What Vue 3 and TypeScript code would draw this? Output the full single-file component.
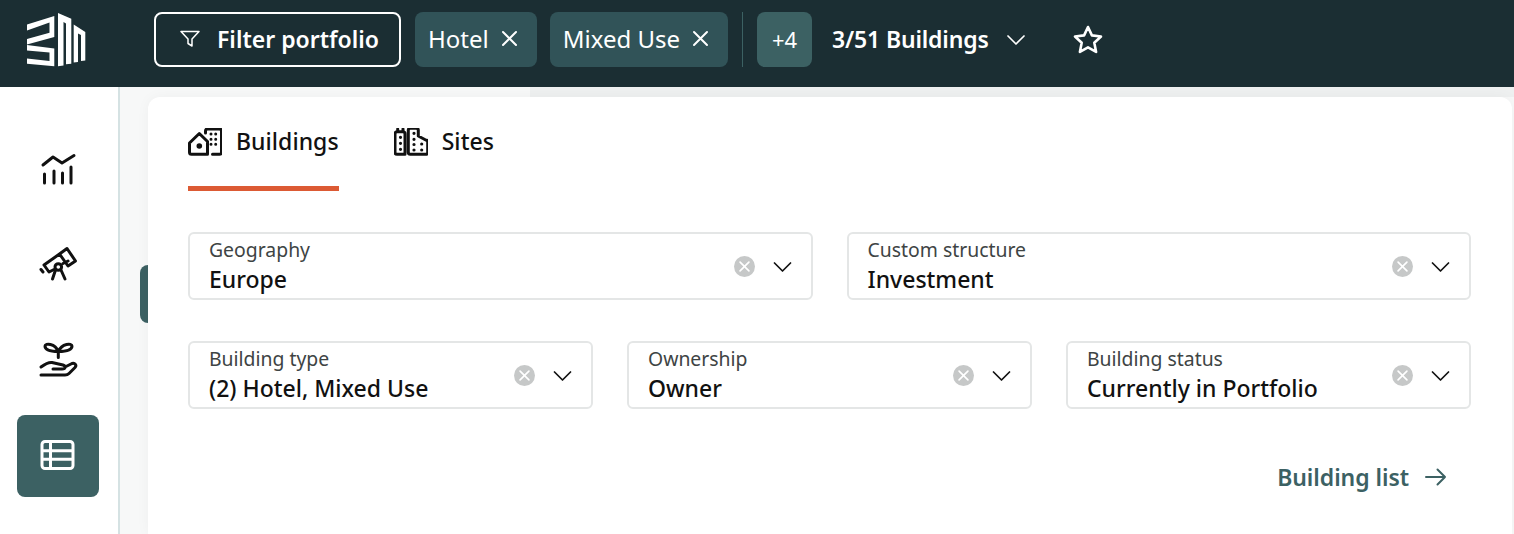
<script setup lang="ts">
interface Field {
  label: string
  value: string
}

const topFields: Field[] = [
  { label: 'Geography', value: 'Europe' },
  { label: 'Custom structure', value: 'Investment' },
]

const bottomFields: Field[] = [
  { label: 'Building type', value: '(2) Hotel, Mixed Use' },
  { label: 'Ownership', value: 'Owner' },
  { label: 'Building status', value: 'Currently in Portfolio' },
]

const rows: { cols: string; fields: Field[] }[] = [
  { cols: 'two', fields: topFields },
  { cols: 'three', fields: bottomFields },
]

const chips = ['Hotel', 'Mixed Use']
</script>

<template>
  <div class="page">
    <header class="topbar">
      <svg class="logo" viewBox="0 0 59 54" fill="#fff">
        <path d="M0 11.500 27.300 3V24L0 31.500V26L22.500 19.700V9.500L0 17.500z" />
        <path d="M0 32 27.300 35.500V53.200L0 50.800V45.500L22.500 48V39.500L0 37.500z" />
        <path d="M31 0 44.300 5.800V50.800L39 51.300V10.500L36.500 9V52.600L31 53.200z" />
        <path d="M46.700 11.500 58.300 19V47.500L54 48V22L51 20.500V49L46.700 49.500z" />
      </svg>
      <button class="filter-btn" type="button">
        <svg class="filter-icon" viewBox="0 0 20 20" fill="none" stroke="#fff" stroke-width="1.500" stroke-linejoin="round">
          <path d="M1 2.500h18l-7 7.500v7l-4-2.500V10z" />
        </svg>
        <span>Filter portfolio</span>
      </button>
      <div v-for="chip in chips" :key="chip" class="chip">
        <span>{{ chip }}</span>
        <svg class="chip-x" viewBox="0 0 17 17" fill="none" stroke="#fff" stroke-width="2" stroke-linecap="round">
          <path d="M2 2l13 13M15 2 2 15" />
        </svg>
      </div>
      <span class="divider"></span>
      <div class="more">+4</div>
      <span class="count">3/51 Buildings</span>
      <svg class="count-caret" viewBox="0 0 18 10" fill="none" stroke="#fff" stroke-width="1.700" stroke-linecap="round" stroke-linejoin="round">
        <path d="M1 1l8 8 8-8" />
      </svg>
      <svg class="star" viewBox="0 0 30 29" fill="none" stroke="#fff" stroke-width="2.600" stroke-linejoin="round">
        <path d="M15 2l3.900 8.400 9.100 1.100-6.700 6.300 1.800 9.100L15 22.400 6.900 26.900l1.800-9.100L2 11.500l9.100-1.100z" />
      </svg>
    </header>

    <div class="body">
      <nav class="sidebar">
        <a class="nav-item">
          <svg viewBox="0 0 36 34" fill="none" stroke="#111" stroke-width="3" stroke-linecap="round" stroke-linejoin="round">
            <path d="M3 11 13 3l9 6L34 1.500M4.500 20v9M14 17v12M22.500 19v10M31 13v16" />
          </svg>
        </a>
        <a class="nav-item">
          <svg viewBox="0 2 36 34" fill="none" stroke="#111" stroke-width="3" stroke-linecap="round" stroke-linejoin="round">
            <path d="M27 1.500 35.500 14 28 19 19.500 7zM19.500 7 4 18l5 7 5-2.500M23 16.500l5-2.500M1 22.500l2 2.500" />
            <circle cx="18.300" cy="20" r="3.300" />
            <path d="M15.500 23l-3 9M21 23l4 9" />
          </svg>
        </a>
        <a class="nav-item">
          <svg viewBox="0 2 36 34" fill="none" stroke="#111" stroke-width="3" stroke-linecap="round" stroke-linejoin="round">
            <path d="M18.300 9.500v6M18.300 9.500C15 9.500 5 9 5 4c0-3 10-3 13.300 5.500zM18.300 9.500C22 9.500 32 9 32 4c0-3-10-3-13.700 5.500z" />
            <path d="M1 25c4-3 7-5 11-4.500l11 2.500c3 1 3 4-1 4H13M26 24.500l6-3c3-1 5 2 3 4l-6 6c-1 1-2 1.500-4 1.500H1" />
          </svg>
        </a>
        <a class="nav-item active">
          <svg viewBox="0 0 36 34" fill="none" stroke="#fff" stroke-width="3" stroke-linejoin="round">
            <rect x="2" y="2.500" width="31" height="27" rx="3" />
            <path d="M2 11.700h31M2 20.300h31M10.500 2.500v27" />
          </svg>
        </a>
      </nav>

      <main class="content">
        <span class="handle"></span>
        <div class="backdrop"></div>
        <section class="panel">
          <div class="tabs">
            <div class="tab active">
              <svg viewBox="0 0 34 28" fill="none" stroke="#111" stroke-width="3" stroke-linejoin="round" stroke-linecap="round">
                <path d="M1.500 15 11.300 5.500 19.500 13.500V26.300H3.500a2 2 0 0 1-2-2zM17.500 5V3a2 2 0 0 1 2-2h12a2 2 0 0 1 2 2v21.300a2 2 0 0 1-2 2h-7" />
                <circle cx="11.300" cy="18" r="2.800" fill="#111" stroke="none" />
                <path d="M23 6v0M27.700 6v0M23 11.300v0M27.700 11.300v0M23 16.300v0M27.700 16.300v0" />
              </svg>
              <span>Buildings</span>
            </div>
            <div class="tab">
              <svg viewBox="0 0 34 28" fill="none" stroke="#111" stroke-width="3" stroke-linejoin="round" stroke-linecap="round">
                <path d="M3.700 3.700V1M9 3.700V1M11 26.300H3a2 2 0 0 1-2-2V5.700a2 2 0 0 1 2-2h6a2 2 0 0 1 2 2zM16.300 26.300a2 2 0 0 1-2-2V2.300a2 2 0 0 1 2-2h6a2 2 0 0 1 2 2V8l7.400 4a2 2 0 0 1 2 2v10.300a2 2 0 0 1-2 2z" />
                <path d="M6.500 9.300v0M6.500 15.300v0M6.500 21.300v0M20 5.300v0M20 11.300v0M20 16.500v0M20 22v0M27.700 16v0M27.700 22v0" stroke-width="3.200" />
              </svg>
              <span>Sites</span>
            </div>
          </div>

          <div class="fields">
            <div v-for="row in rows" :key="row.cols" class="field-row" :class="row.cols">
              <div v-for="field in row.fields" :key="field.label" class="field">
                <div class="field-text">
                  <span class="field-label">{{ field.label }}</span>
                  <span class="field-value">{{ field.value }}</span>
                </div>
                <span class="clear">
                  <svg viewBox="0 0 10 10" fill="none" stroke="#fff" stroke-width="1.500" stroke-linecap="round">
                    <path d="M1 1l8 8M9 1 1 9" />
                  </svg>
                </span>
                <svg class="caret" viewBox="0 0 18 10" fill="none" stroke="#111" stroke-width="1.700" stroke-linecap="round" stroke-linejoin="round">
                  <path d="M1 1l8 8 8-8" />
                </svg>
              </div>
            </div>
          </div>

          <div class="panel-foot">
            <a class="list-link">
              <span>Building list</span>
              <svg viewBox="0 0 22 18" fill="none" stroke="#3c6163" stroke-width="2" stroke-linecap="round" stroke-linejoin="round">
                <path d="M1 9h19M12.500 1.500 20 9l-7.500 7.500" />
              </svg>
            </a>
          </div>
        </section>
      </main>
    </div>
  </div>
</template>

<style>
html,
body {
  margin: 0;
  background: #fff;
}
</style>

<style scoped>
.page {
  width: 1514px;
  height: 534px;
  overflow: hidden;
  display: flex;
  flex-direction: column;
  font-family: "Noto Sans", "Open Sans", sans-serif;
  color: #111;
}

.topbar {
  height: 87px;
  flex: none;
  background: #1b2e33;
  display: flex;
  align-items: center;
  color: #fff;
  box-sizing: border-box;
  padding: 0 0 8px 27px;
}

.logo {
  width: 59px;
  height: 54px;
  margin-right: 68px;
}

.filter-btn {
  height: 55px;
  width: 247px;
  box-sizing: border-box;
  border: 2px solid #fff;
  border-radius: 8px;
  background: transparent;
  color: #fff;
  font: 600 23px "Noto Sans", sans-serif;
  display: flex;
  align-items: center;
  padding: 0 0 2px 24px;
  gap: 17px;
  margin-right: 14px;
}

.filter-icon {
  width: 20px;
  height: 20px;
}

.chip {
  height: 55px;
  box-sizing: border-box;
  background: #315358;
  border-radius: 8px;
  display: flex;
  align-items: center;
  padding: 0 19px 2px 13px;
  gap: 12px;
  font-size: 24px;
  margin-right: 13px;
}

.chip-x {
  width: 17px;
  height: 17px;
}

.divider {
  width: 1px;
  height: 55px;
  background: #3c6163;
  margin-right: 14px;
  margin-left: 1px;
}

.more {
  width: 55px;
  height: 55px;
  box-sizing: border-box;
  padding-bottom: 2px;
  background: #3c6163;
  border-radius: 8px;
  display: flex;
  align-items: center;
  justify-content: center;
  font-size: 22px;
  margin-right: 20px;
}

.count {
  font-size: 23px;
  font-weight: 600;
  letter-spacing: -0.15px;
  padding-bottom: 2px;
  margin-right: 18px;
}

.count-caret {
  width: 18px;
  height: 10px;
  margin-right: 48px;
}

.star {
  width: 30px;
  height: 29px;
}

.body {
  flex: 1;
  display: flex;
  min-height: 0;
}

.sidebar {
  width: 120px;
  flex: none;
  box-sizing: border-box;
  border-right: 2px solid #d5e2e3;
  padding: 43px 0 0 17px;
  display: flex;
  flex-direction: column;
  gap: 13px;
}

.nav-item {
  width: 82px;
  height: 82px;
  border-radius: 8px;
  display: flex;
  align-items: center;
  justify-content: center;
}

.nav-item svg {
  width: 36px;
  height: 34px;
  overflow: visible;
}

.nav-item.active {
  background: #3c6163;
}

.content {
  flex: 1;
  position: relative;
  background: #f7f8f8;
  box-sizing: border-box;
  padding: 10px 2px 0 28px;
  display: flex;
}

.backdrop {
  position: absolute;
  left: 410px;
  right: 0;
  top: 0;
  height: 10px;
  background: #eef0f0;
}

.handle {
  position: absolute;
  left: 20px;
  top: 178px;
  width: 16px;
  height: 58px;
  border-radius: 8px;
  background: #3c6163;
}

.panel {
  position: relative;
  flex: 1;
  background: #fff;
  border-radius: 12px 12px 0 0;
  box-sizing: border-box;
  padding: 0 41px 0 40px;
  box-shadow: 0 0 14px rgba(27, 46, 51, 0.04);
}

.tabs {
  height: 94px;
  display: flex;
  gap: 55px;
}

.tab {
  height: 94px;
  box-sizing: border-box;
  padding-top: 28px;
  display: flex;
  align-items: flex-start;
  gap: 14px;
  font-size: 23px;
  font-weight: 500;
  line-height: 32px;
  letter-spacing: 0.05px;
}

.tab svg {
  width: 34px;
  height: 28px;
  margin-top: 3px;
}

.tab.active {
  border-bottom: 5px solid #dc5a34;
}

.fields {
  margin-top: 41px;
  display: flex;
  flex-direction: column;
  gap: 41px;
}

.field-row {
  display: grid;
  gap: 34px;
}

.field-row.two {
  grid-template-columns: 1fr 1fr;
}

.field-row.three {
  grid-template-columns: 1fr 1fr 1fr;
}

.field {
  height: 68px;
  box-sizing: border-box;
  border: 2px solid #e4e6e6;
  border-radius: 6px;
  display: flex;
  align-items: center;
  padding: 0 19px 0 19px;
}

.field-text {
  flex: 1;
  min-width: 0;
  display: flex;
  flex-direction: column;
  margin-top: -2px;
}

.field-label {
  font-size: 19.400px;
  line-height: 28px;
  color: #3e4444;
}

.field-value {
  font-size: 23px;
  line-height: 31px;
  font-weight: 500;
}

.clear {
  width: 21px;
  height: 21px;
  border-radius: 50%;
  background: #c6c8c8;
  display: flex;
  align-items: center;
  justify-content: center;
  margin: 0 18px 0 0;
}

.clear svg {
  width: 11px;
  height: 11px;
}

.caret {
  width: 19px;
  height: 10px;
  margin-top: 2px;
}

.panel-foot {
  display: flex;
  justify-content: flex-end;
  margin-top: 52px;
  padding-right: 24px;
}

.list-link {
  display: flex;
  align-items: center;
  gap: 16px;
  color: #3c6163;
  font-size: 23px;
  font-weight: 600;
  letter-spacing: -0.05px;
}

.list-link svg {
  width: 22px;
  height: 18px;
}
</style>
